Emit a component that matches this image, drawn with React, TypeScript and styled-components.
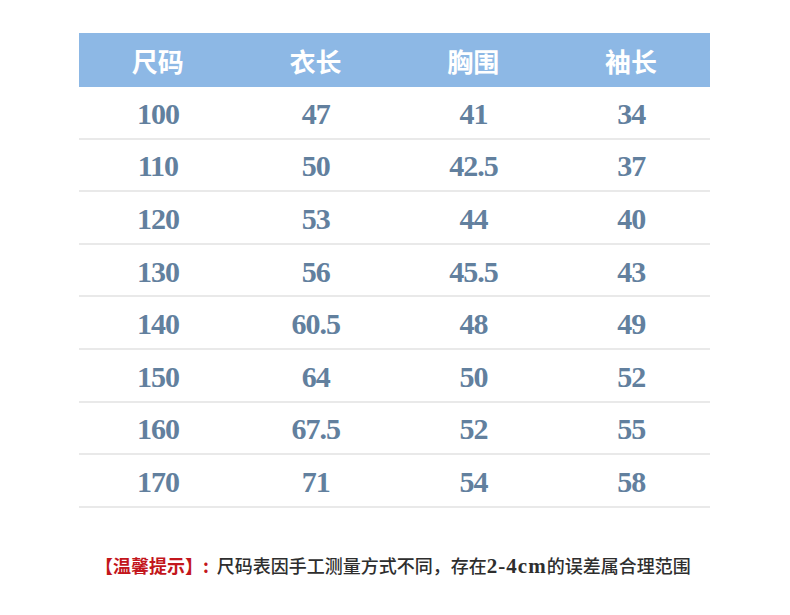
import React from "react";
import styled, {createGlobalStyle} from "styled-components";

const GlobalStyle = createGlobalStyle`
  html, body {
    margin: 0;
    padding: 0;
    background: #ffffff;
  }
`;

const Page = styled.div`
  width: 790px;
  height: 615px;
  background: #fff;
  padding-top: 33px;
  box-sizing: border-box;
`;

const Table = styled.div`
  width: 631px;
  margin-left: 79px;
`;

const HeaderRow = styled.div`
  display: grid;
  grid-template-columns: repeat(4, 1fr);
  height: 54px;
  background: #8db8e5;
  align-items: center;
`;

const HeaderCell = styled.div`
  text-align: center;
  color: #ffffff;
  font-family: "Noto Sans CJK SC", sans-serif;
  font-weight: 700;
  font-size: 26px;
  line-height: 1;
  padding-top: 2px;
`;

const Row = styled.div`
  display: grid;
  grid-template-columns: repeat(4, 1fr);
  height: 52.6px;
  box-sizing: border-box;
  border-bottom: 2px solid #e9e9e9;
  align-items: center;
`;

const Cell = styled.div`
  text-align: center;
  color: #62809e;
  font-family: "Liberation Serif", "Times New Roman", serif;
  font-weight: 700;
  font-size: 30px;
  letter-spacing: -1px;
  line-height: 1;
  padding-top: 3px;
`;

const Note = styled.div`
  margin: 44px 0 0 95px;
  font-family: "Noto Sans CJK SC", sans-serif;
  font-size: 18px;
  line-height: 26px;
  color: #2e2e2e;
  font-weight: 500;
`;

const Latin = styled.span`
  font-family: "Liberation Serif", serif;
  font-weight: 700;
  font-size: 21px;
  letter-spacing: 1px;
`;

const Tip = styled.span`
  color: #c3161c;
  font-weight: 700;
  margin-right: 8px;
`;

const headers = ["尺码", "衣长", "胸围", "袖长"];

const rows = [
    ["100", "47", "41", "34"],
    ["110", "50", "42.5", "37"],
    ["120", "53", "44", "40"],
    ["130", "56", "45.5", "43"],
    ["140", "60.5", "48", "49"],
    ["150", "64", "50", "52"],
    ["160", "67.5", "52", "55"],
    ["170", "71", "54", "58"],
];

const App = () => {
    return <Page>
        <GlobalStyle/>
        <Table>
            <HeaderRow>
                {headers.map(h => <HeaderCell key={h}>{h}</HeaderCell>)}
            </HeaderRow>
            {rows.map(r => <Row key={r[0]}>
                {r.map((v, i) => <Cell key={i}>{v}</Cell>)}
            </Row>)}
        </Table>
        <Note>
            <Tip>【温馨提示】:</Tip>尺码表因手工测量方式不同，存在<Latin>2-4cm</Latin>的误差属合理范围
        </Note>
    </Page>;
}

export default App;
